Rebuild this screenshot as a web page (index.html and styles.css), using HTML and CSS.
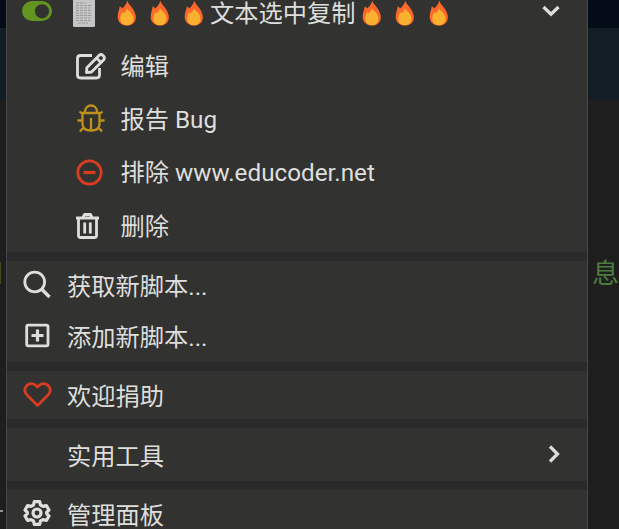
FILE: index.html
```html
<!DOCTYPE html>
<html lang="zh-CN">
<head>
<meta charset="utf-8">
<title>脚本菜单</title>
<link rel="stylesheet" href="styles.css">
</head>
<body>
<svg class="defs" aria-hidden="true">
  <symbol id="flame" viewBox="0 0 20 26">
    <path fill="#fa692a" d="M10.300 .5C11 4.500 17 7.500 18.700 15.500C19.700 22 15.500 25.600 10 25.600C4 25.600.3 21.500.7 16C1 12 2.300 10 2.800 6.300C4 7 4.700 7.700 5 8.500C7.500 6.500 9.600 4 10.300 .5Z"/>
    <path fill="#fbb130" d="M10 8.500C11.500 11 16.500 13.500 16.500 18.500C16.500 23 13.500 25.200 10 25.200C6 25.200 3.300 22.700 3.300 18.800C3.300 16 4 14 5.400 12.200L6.600 13.300C8 12 9.300 10.500 10 8.500Z"/>
  </symbol>
</svg>
<div class="page">
  <div class="side left"><span class="frag olive"></span><span class="frag dash"></span></div>
  <main class="menu">
    <section class="group script">
      <div class="row title">
        <svg class="toggle" viewBox="0 0 30 20"><path fill="#639421" fill-rule="evenodd" d="M10 0H20A10 10 0 0 1 20 20H10A10 10 0 0 1 10 0ZM20 3.200A7.100 7.100 0 1 0 20 17.400A7.100 7.100 0 0 0 20 3.200Z"/></svg>
        <svg class="doc" viewBox="0 0 22 29"><rect width="22" height="29" rx="1.500" fill="#c5c6c5"/><path d="M3 5h10M3 7.500h15M3 10h14M3 12.500h16M3 15h15M3 17.500h16M3 20h14M3 22.500h15M5 25h10" stroke="#989998" stroke-dasharray="3 1"/></svg>
        <span class="flames"><svg><use href="#flame"/></svg><svg><use href="#flame"/></svg><svg><use href="#flame"/></svg></span>
        <span class="name">文本选中复制</span>
        <span class="flames"><svg><use href="#flame"/></svg><svg><use href="#flame"/></svg><svg><use href="#flame"/></svg></span>
        <svg class="chevron down" viewBox="0 0 18 12"><path d="M1.500 2 9 9.200 16.500 2"/></svg>
      </div>
      <div class="row sub">
        <svg class="icon" viewBox="0 0 32 32"><path d="M18 5.500H6.500Q3.500 5.500 3.500 8.500V25Q3.500 28 6.500 28H22.500Q25.500 28 25.500 25V18"/><path d="M12.500 22.500 12.800 17.700 25 5.500Q27 3.500 29 5.500L29.700 6.200Q31.200 8 29.500 10L17.500 22ZM22.500 8 27 12.500"/></svg>
        <span>编辑</span>
      </div>
      <div class="row sub">
        <svg class="icon gold" viewBox="0 0 32 32"><path d="M11 9.500V8.500A6 6 0 0 1 23 8.500V9.500M8.500 10H25.500V21Q25.500 27.500 17 27.500 8.500 27.500 8.500 21ZM17 15V27M3.500 17.500H8.500M25.500 17.500H30.500M5.500 8.500 9 11.500M28.500 8.500 25 11.500M6 28.500 9.500 24.500M28 28.500 24.500 24.500"/></svg>
        <span>报告 Bug</span>
      </div>
      <div class="row sub exclude">
        <svg class="icon red" viewBox="0 0 32 32"><circle cx="15.500" cy="16.500" r="11.700"/><path d="M9.500 16.500H21.500" stroke-width="3.200"/></svg>
        <span>排除 www.educoder.net</span>
      </div>
      <div class="row sub">
        <svg class="icon" viewBox="0 0 32 32"><path d="M2 8H25M9 7.500 10.500 4.500H16.500L18 7.500M4.500 8V25.500Q4.500 27.500 6.500 27.500H20.500Q22.500 27.500 22.500 25.500V8M10.700 12.500V23.500M16.300 12.500V23.500"/></svg>
        <span>删除</span>
      </div>
    </section>
    <section class="group scripts">
      <div class="row">
        <svg class="icon" viewBox="0 0 32 32"><circle cx="12.700" cy="13" r="9.900"/><path d="M19.500 20 27.500 28" stroke-width="3.400"/></svg>
        <span>获取新脚本...</span>
      </div>
      <div class="row">
        <svg class="icon" viewBox="0 0 32 32"><rect x="4.700" y="5.200" width="21.300" height="20.600" rx="1.500"/><path d="M9.500 15.500H21.500M15.500 9.500V21.500" stroke-width="3.200"/></svg>
        <span>添加新脚本...</span>
      </div>
    </section>
    <section class="group donate">
      <div class="row">
        <svg class="icon red" viewBox="0 0 32 32"><path d="M15.500 26.500 5 16C-.5 10.500 5.500 3.200 11.500 5Q13.500 5.600 15.500 8 17.500 5.600 19.500 5C25.500 3.200 31.500 10.500 26 16Z"/></svg>
        <span>欢迎捐助</span>
      </div>
    </section>
    <section class="group tools">
      <div class="row">
        <span class="icon"></span><span>实用工具</span>
        <svg class="chevron next" viewBox="0 0 12 18"><path d="M2 1.500 9.500 9 2 16.500"/></svg>
      </div>
    </section>
    <section class="group panel">
      <div class="row">
        <svg class="icon gear" viewBox="0 0 32 32"><circle cx="15" cy="16" r="4"/><path d="M12.300 4.700H17.700L18.500 8 21 9.400 24.400 8.500 27 13 24.600 15.400V16.600L27 19 24.400 23.500 21 22.600 18.500 24 17.700 27.300H12.300L11.500 24 9 22.600 5.600 23.500 3 19 5.400 16.600V15.400L3 13 5.600 8.500 9 9.400 11.500 8Z"/></svg>
        <span>管理面板</span>
      </div>
    </section>
  </main>
  <div class="side right"><span class="code">息</span></div>
</div>
</body>
</html>
```
FILE: styles.css
```css
* { box-sizing: border-box; }
body {
  margin: 0;
  overflow: hidden;
  background: #1f1f1f;
  color: #dededc;
  font: 24.25px/30px Roboto, "Noto Sans CJK SC", sans-serif;
}
.defs { position: absolute; width: 0; height: 0; }
.page {
  display: grid;
  grid-template-columns: 6px 582px 31px;
  height: 529px;
  background: linear-gradient(#040d17 28px, #121d26 28px 99px, #1e1e1e 99px);
}
.side { display: flex; flex-direction: column; overflow: hidden; }
.olive { width: 1px; height: 22px; margin-top: 262px; background: #4a4720; }
.dash { width: 3px; height: 2px; margin-top: 226px; background: #99978e; }
.right { padding: 258px 0 0 4px; }
.code { color: #4b7c3e; font-size: 27px; line-height: 32px; white-space: nowrap; }
.menu {
  display: flex;
  flex-direction: column;
  gap: 9px;
  height: 529px;
  overflow: hidden;
  border: solid #48484a;
  border-width: 0 1px;
  background: #2a2a2a;
}
.group { flex: none; background: #323230; }
.script { height: 252px; }
.scripts { height: 101px; }
.donate { height: 48px; }
.tools { height: 53px; }
.panel { height: 48px; }
.row { display: flex; align-items: center; height: 51px; padding-left: 15px; white-space: nowrap; }
.row > span:not(.icon) { padding-top: 1px; }
.icon {
  flex: none;
  width: 32px;
  height: 32px;
  margin-right: 13px;
  fill: none;
  stroke: #dededc;
  stroke-width: 2.8;
  stroke-linejoin: round;
}
.gold { stroke: #bd911c; stroke-width: 2.3; }
.red { stroke: #d93d20; }
.gear { stroke-width: 3.2; }
.sub { height: 53.3px; padding-left: 67px; }
.sub .icon { margin-right: 14.500px; }
.sub > svg.icon { margin-top: -1px; }
.exclude { padding-bottom: 2px; }
.title { height: 40px; align-items: flex-start; }
.toggle { width: 30px; height: 20px; margin-top: 1px; }
.doc { width: 22px; height: 29px; margin: -2px 0 0 21px; }
.flames { display: flex; gap: 13.3px; margin-left: 22px; }
.row > span.flames { padding-top: 0; }
.flames svg { width: 20px; height: 26px; }
.row > span.name { margin: -1px 0 0 6.500px; padding-top: 0; }
.title .name + .flames { margin-left: 6.500px; }
.chevron { margin-left: auto; fill: none; stroke: #dededc; stroke-width: 3.2; }
.down { width: 18px; height: 12px; margin-top: 5px; margin-right: 27px; }
.next { width: 12px; height: 18px; margin-right: 27px; }
.scripts .row { height: 50.500px; }
.scripts svg.icon { margin-top: -3px; }
.scripts .row + .row svg.icon { margin-top: -2px; }
.scripts .row + .row > span { padding-top: 3px; }
.donate .row { height: 50px; }
.donate svg.icon { margin-top: -3px; }
.tools .row { height: 53px; }
.tools .row > span:not(.icon) { padding-top: 4px; }
.tools .next { margin-top: -2px; }
.panel svg.icon { margin-top: -5px; }
```
